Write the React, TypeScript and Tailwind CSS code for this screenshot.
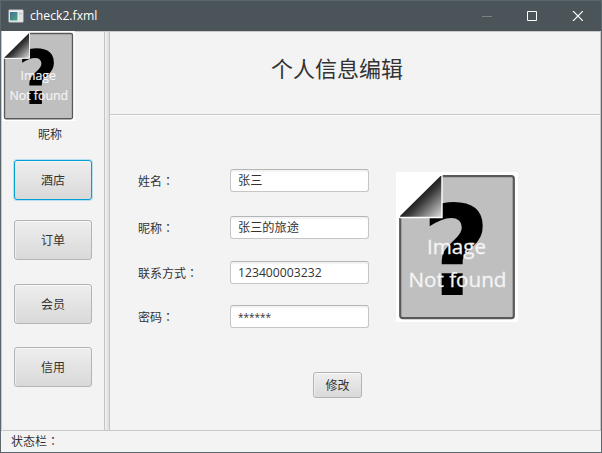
import React from "react";

function MissingImage({ id, className }: { id: string; className: string }) {
  return (
    <svg viewBox="0 0 122 150" preserveAspectRatio="none" className={className}>
      <defs>
        <linearGradient id={id} x1="0.25" y1="0.25" x2="1" y2="1">
          <stop offset="0.15" stopColor="#000" />
          <stop offset="0.45" stopColor="#3c3c3c" />
          <stop offset="1" stopColor="#e0e0e0" />
        </linearGradient>
      </defs>
      <rect width="122" height="150" fill="#fff" />
      <rect x="4.2" y="4.2" width="113.6" height="142" rx="2.5" fill="#bfbfbf" stroke="#585858" strokeWidth="2.2" />
      <text x="60" y="122.5" textAnchor="middle" fontSize="125" fontWeight="700" textLength="69" lengthAdjust="spacingAndGlyphs" className="font-['DejaVu_Sans',sans-serif]">?</text>
      <path d="M0 0H46V46H0Z" fill="#fff" />
      <path d="M4 45V44L44.5 4H46V45Z" fill={`url(#${id})`} />
      <path d="M46 3V45.5H4" fill="none" stroke="#fff" strokeWidth="1.4" />
      <g fill="#f4f4f4" stroke="#f4f4f4" strokeWidth="0.3" fontSize="20" className="font-['Open_Sans',sans-serif]">
        <text x="31" y="82" textLength="59" lengthAdjust="spacingAndGlyphs">Image</text>
        <text x="12.5" y="114.5" textLength="98" lengthAdjust="spacingAndGlyphs">Not found</text>
      </g>
    </svg>
  );
}

function Label({ text }: { text: string }) {
  return (
    <span className="whitespace-nowrap">
      {text}
      <span className="font-['Noto_Sans_CJK_TC',sans-serif]">：</span>
    </span>
  );
}

function NavButton({ text, className }: { text: string; className: string }) {
  return (
    <button className={`flex h-10 w-[78px] shrink-0 items-center justify-center rounded-[3px] border bg-linear-to-b from-[#eeeeee] to-[#d9d9d9] pt-[2px] ${className}`}>
      {text}
    </button>
  );
}

function Field({ label, value, className, valueClass = "text-[12.2px]" }: { label: string; value: string; className: string; valueClass?: string }) {
  return (
    <div className={`flex h-[23px] items-center ${className}`}>
      <div className="w-[92px] shrink-0 pt-px"><Label text={label} /></div>
      <div className={`flex h-[23px] w-[139px] items-center rounded-[3px] border border-[#c6c6c6] border-t-[#b5b5b5] bg-white pl-[7px] shadow-[inset_0_2px_1px_#f3f3f3] ${valueClass}`}>
        {value}
      </div>
    </div>
  );
}

const plain = "border-[#b4b4b4] shadow-[inset_0_1px_0_#f7f7f7,inset_1px_0_0_#eeeeee]";

export default function App() {
  return (
    <div className="flex h-[453px] w-[602px] flex-col overflow-hidden border border-[#5c666d] bg-[#f3f3f3] font-['Open_Sans','Noto_Sans_CJK_SC',sans-serif] text-[12px] leading-4 text-[#333333]">
      <header className="flex h-[30px] shrink-0 items-center bg-[#4b5458] text-white">
        <svg width="16" height="14" viewBox="0 0 16 14" className="ml-[7px]">
          <defs>
            <linearGradient id="app-icon" x1="0" y1="0" x2="1" y2="1">
              <stop stopColor="#3d6f9b" /><stop offset="1" stopColor="#54a77c" />
            </linearGradient>
          </defs>
          <path d="M1 1H15V13H1Z" fill="#f2f2f2" stroke="#c9cdd0" />
          <path d="M2 3H9.5V11.5H2Z" fill="url(#app-icon)" />
          <path d="M10.5 3H14V6.5H10.5Z" fill="#d0d4d8" />
          <path d="M10.5 7H14V11.5H10.5Z" fill="#dfe2e4" />
        </svg>
        <span className="ml-[6px] text-[12.2px]">check2.fxml</span>
        <svg width="101" height="10" viewBox="0 0 101 10" className="mr-[18px] ml-auto" fill="none">
          <path d="M0 5.5H10" stroke="#7a8286" />
          <path d="M45.5 .5H54.5V9.5H45.5Z" stroke="#fff" />
          <path d="M91 0L101 10M101 0L91 10" stroke="#fff" strokeWidth="1.2" />
        </svg>
      </header>

      <main className="flex h-[400px] shrink-0 border border-[#c8c8c8]">
        <aside className="flex w-[102px] shrink-0 flex-col">
          <MissingImage id="fold-small" className="-mt-px h-[90px] w-[73px] shrink-0" />
          <div className="mt-[6px] ml-9">昵称</div>
          <NavButton text="酒店" className="mt-[17px] ml-3 border-[#039ed3] shadow-[0_0_0_1px_#b8dfed,inset_0_1px_0_#f7f7f7]" />
          <NavButton text="订单" className={`mt-5 ml-3 ${plain}`} />
          <NavButton text="会员" className={`mt-6 ml-3 ${plain}`} />
          <NavButton text="信用" className={`mt-[23px] ml-3 ${plain}`} />
        </aside>
        <div className="w-[6px] shrink-0 border-x border-[#c4c4c4] bg-linear-to-r from-[#f1f1f1] to-[#dddddd]" />
        <section className="flex min-w-0 flex-1 flex-col">
          <h1 className="h-[83px] shrink-0 border-b border-[#c8c8c8] pt-5 pl-[161px] text-[22px] leading-8 shadow-[0_1px_0_#fbfbfb]">个人信息编辑</h1>
          <div className="flex flex-1 pl-7">
            <div className="w-[258px] pt-[54px]">
              <Field label="姓名" value="张三" className="" />
              <Field label="昵称" value="张三的旅途" className="mt-6" />
              <Field label="联系方式" value="123400003232" className="mt-[22px]" />
              <Field label="密码" value="******" className="mt-[21px]" valueClass="text-[10px]" />
              <button className={`mt-[44px] ml-[175px] flex h-[26px] w-[49px] items-center justify-center rounded-[3px] border bg-linear-to-b from-[#eeeeee] to-[#d9d9d9] pt-px ${plain}`}>修改</button>
            </div>
            <MissingImage id="fold-large" className="mt-[57px] h-[150px] w-[122px] shrink-0" />
          </div>
        </section>
      </main>
      <footer className="flex flex-1 items-center pl-[10px]"><Label text="状态栏" /></footer>
    </div>
  );
}
